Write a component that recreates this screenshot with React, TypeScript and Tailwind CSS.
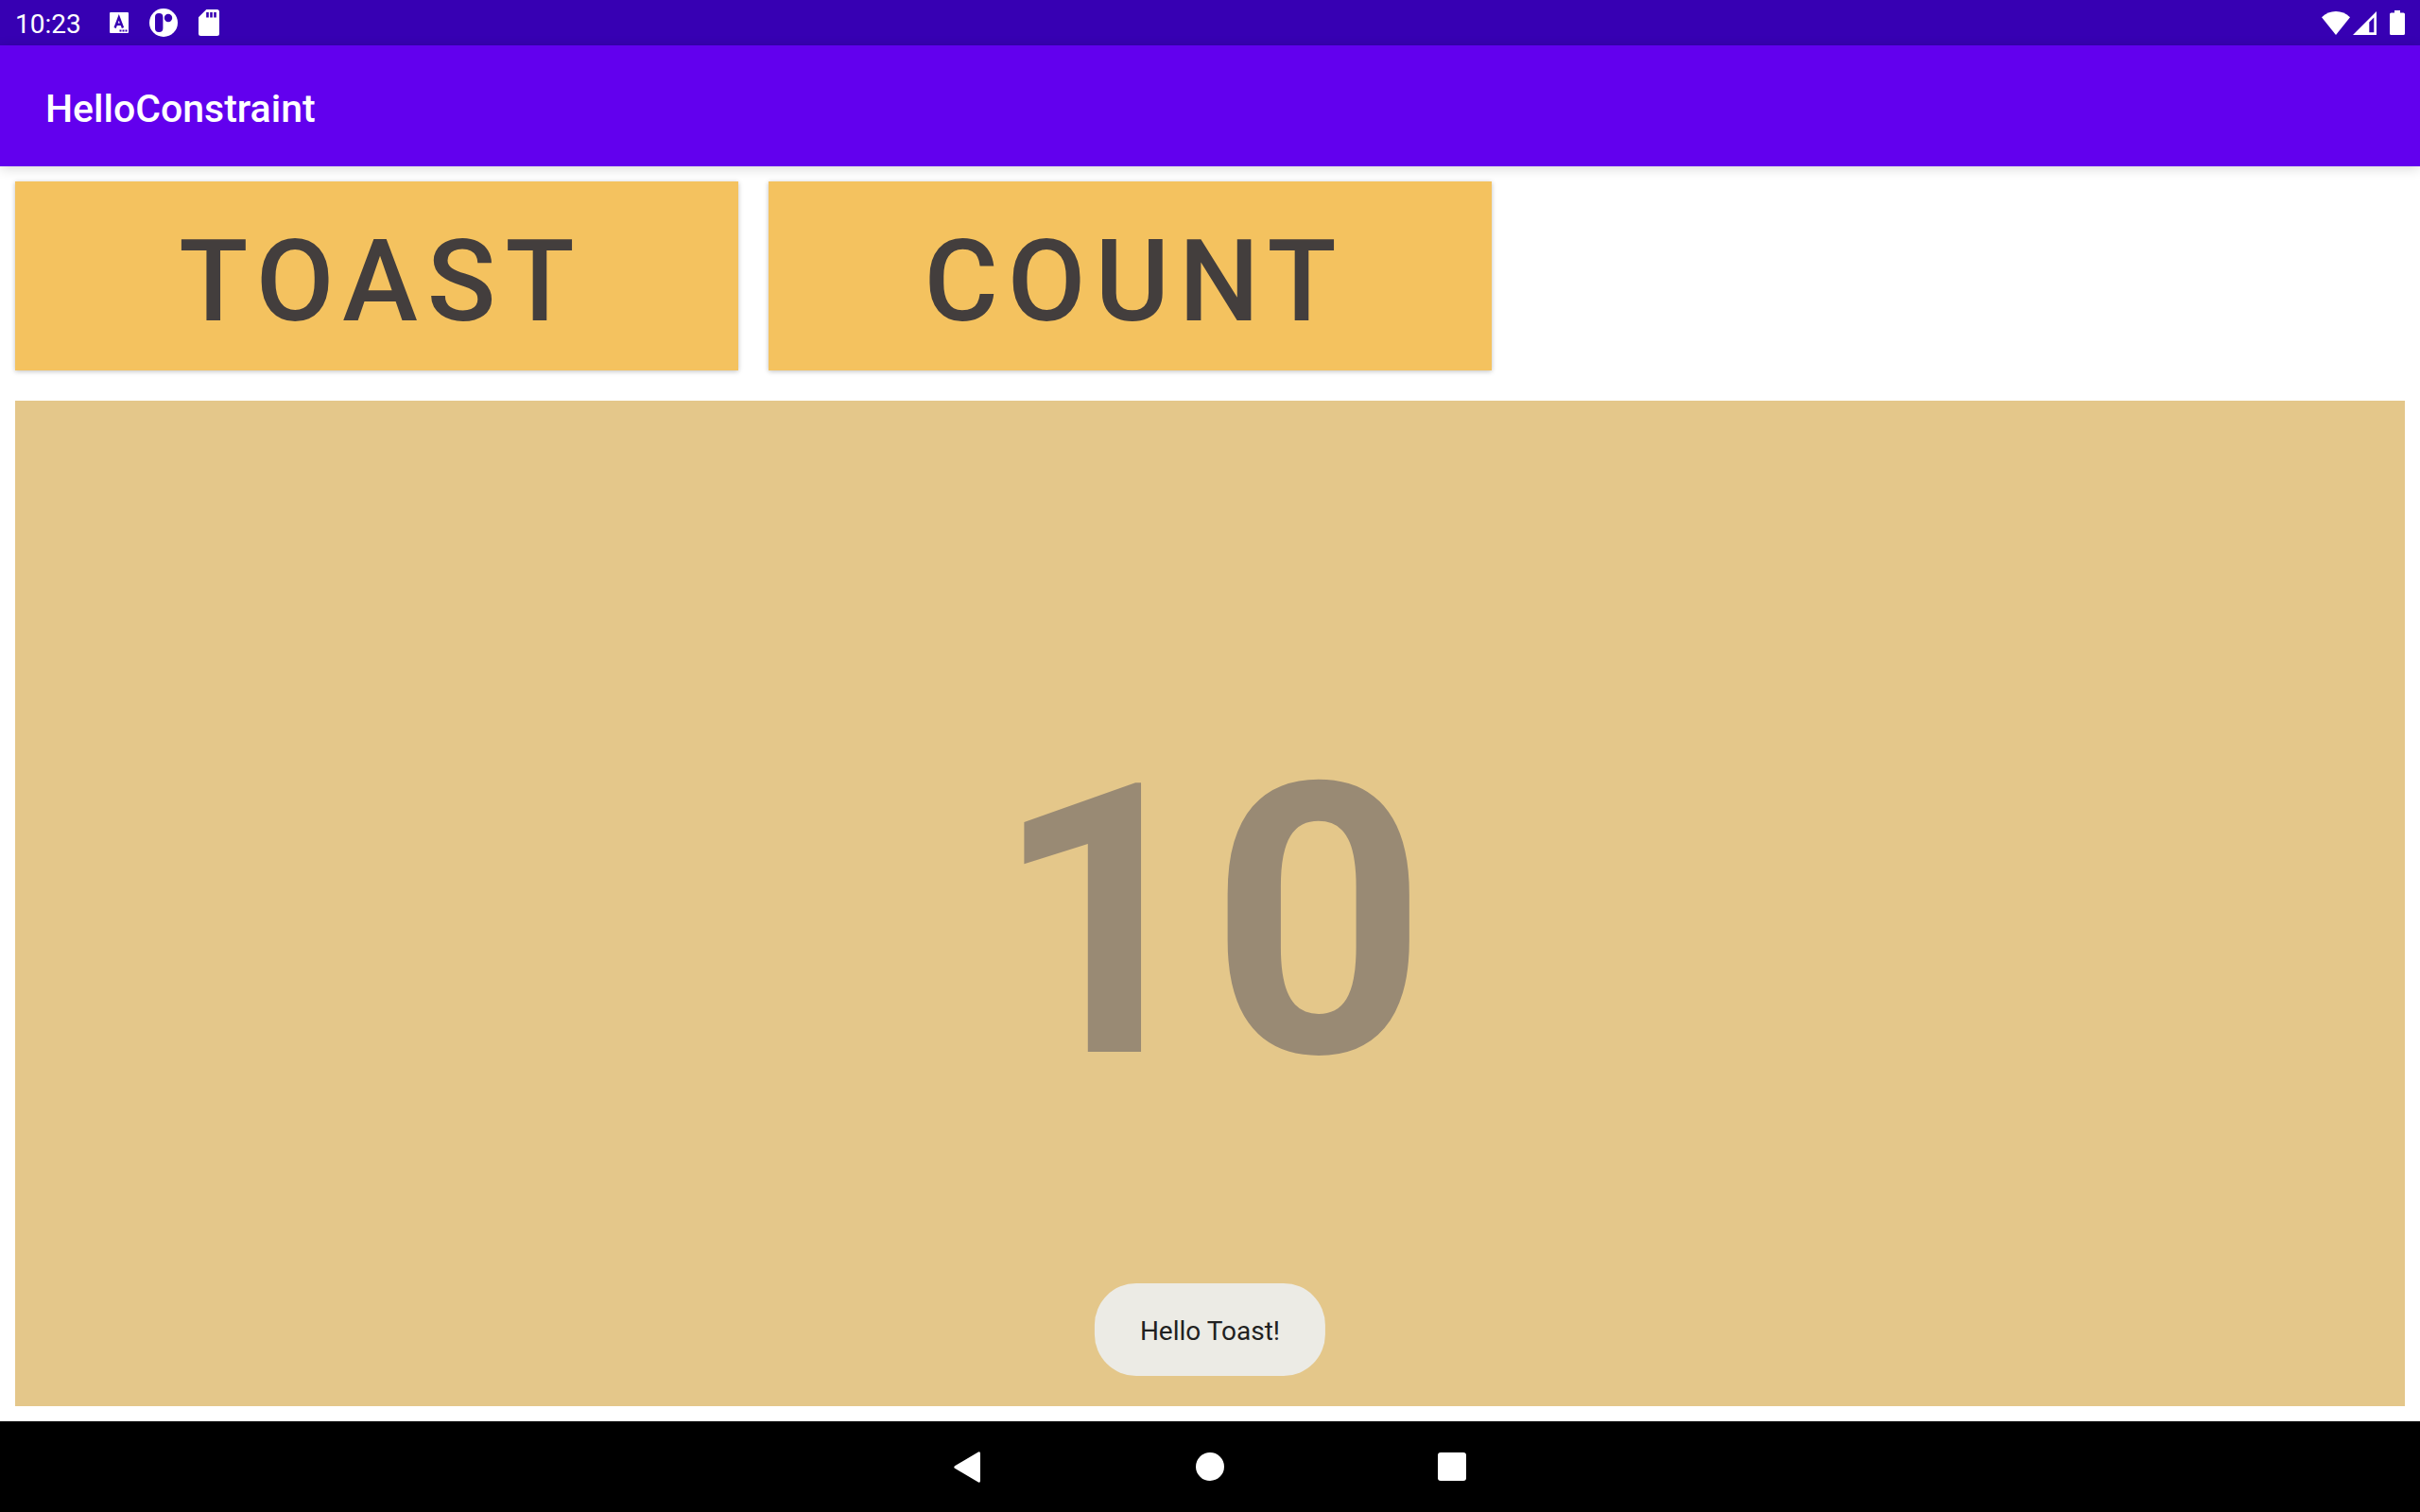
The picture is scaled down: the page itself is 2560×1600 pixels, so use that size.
import { useState } from "react";

function KeyboardIcon() {
  return (
    <svg className="h-[22px] w-5" viewBox="0 0 20 22" aria-hidden="true">
      <path fill="#fff" d="M1 0H19Q20 0 20 1V21Q20 22 19 22H1Q0 22 0 21V1Q0 0 1 0Z" />
      <path fill="none" stroke="#3700b3" strokeWidth="2.4" d="M5.6 16.5L9.8 5.4L14 16.5M7 12.8H12.6" />
      <path fill="#3700b3" d="M10.5 18.4h2v2h-2zM13.5 18.4h2v2h-2zM16.5 18.4h2v2h-2z" />
    </svg>
  );
}

function AppIcon() {
  return (
    <svg className="h-[30px] w-[30px]" viewBox="0 0 30 30" aria-hidden="true">
      <circle cx="15" cy="15" r="15" fill="#fff" />
      <rect x="6" y="5" width="8.4" height="20" rx="4" fill="#3700b3" />
      <circle cx="20" cy="10" r="4.2" fill="#3700b3" />
    </svg>
  );
}

function SdCardIcon() {
  return (
    <svg className="h-7 w-[22px]" viewBox="0 0 22 28" aria-hidden="true">
      <path fill="#fff" d="M8.3 0H19.5Q22 0 22 2.5V25.5Q22 28 19.5 28H2.5Q0 28 0 25.5V8.3Z" />
      <path fill="#3700b3" d="M8.2 3h2.6v5.600H8.2zM12.2 3h2.6v5.600h-2.6zM16.2 3h2.6v5.600h-2.6z" />
    </svg>
  );
}

function WifiIcon() {
  return (
    <svg className="h-[25px] w-[30px]" viewBox="0 0 30 25" aria-hidden="true">
      <path fill="#fff" d="M15 25L0 6.2Q6.5 0 15 0T30 6.2Z" />
    </svg>
  );
}

function SignalIcon() {
  return (
    <svg className="h-[25px] w-[25px]" viewBox="0 0 25 25" aria-hidden="true">
      <path fill="#fff" fillRule="evenodd" d="M25 0V25H0ZM22.3 6.5L17.3 11.5V22.3H22.3Z" />
    </svg>
  );
}

function BatteryIcon() {
  return (
    <svg className="h-[26px] w-4" viewBox="0 0 16 26" aria-hidden="true">
      <path fill="#fff" d="M5 0H11V2.5H14.5Q16 2.5 16 4V24.5Q16 26 14.5 26H1.5Q0 26 0 24.5V4Q0 2.5 1.5 2.5H5Z" />
    </svg>
  );
}

const actionButton =
  "h-[200px] w-[765px] bg-[#f4c25f] pt-3 pl-[10px] text-center text-[120px] leading-none font-medium tracking-[10px] text-[#433e3d] shadow-[0_1px_5px_rgba(0,0,0,0.25)]";

export default function App() {
  const [count, setCount] = useState(10);
  const [toast, setToast] = useState(true);

  return (
    <div className="flex min-h-screen flex-col bg-white font-[Roboto,sans-serif]">
      <div className="flex h-12 items-center bg-[#3700b3] px-4 text-white">
        <span className="pt-1 text-[28px] leading-8">10:23</span>
        <div className="ml-[30px] flex items-center gap-[22px]">
          <KeyboardIcon />
          <AppIcon />
          <SdCardIcon />
        </div>
        <div className="ml-auto flex items-center">
          <WifiIcon />
          <span className="ml-[3px]">
            <SignalIcon />
          </span>
          <span className="ml-3.5">
            <BatteryIcon />
          </span>
        </div>
      </div>

      <header className="flex h-32 items-center bg-[#6200ee] px-12 shadow-[0_2px_12px_rgba(0,0,0,0.16)]">
        <h1 className="pt-1.5 text-[41px] leading-[48px] font-medium text-white">HelloConstraint</h1>
      </header>

      <main className="flex flex-1 flex-col gap-8 p-4">
        <div className="flex gap-8">
          <button type="button" className={actionButton} onClick={() => setToast(!toast)}>
            TOAST
          </button>
          <button type="button" className={actionButton} onClick={() => setCount(count + 1)}>
            COUNT
          </button>
        </div>
        <section className="relative flex flex-1 items-center justify-center bg-[#e4c78a]">
          <output className="pt-[42px] text-[400px] leading-none font-bold text-[#998a74]">{count}</output>
          {toast && (
            <div
              role="status"
              className="absolute bottom-8 left-1/2 flex h-[98px] -translate-x-1/2 items-center rounded-[44px] bg-[#ecebe5] px-12 pt-1 text-[28px] leading-8 whitespace-nowrap text-[#212121]"
            >
              Hello Toast!
            </div>
          )}
        </section>
      </main>

      <nav className="flex h-24 items-center justify-center gap-[226px] bg-black">
        <button type="button" aria-label="Back">
          <svg className="h-[33px] w-[30px]" viewBox="1 0 30 33">
            <path fill="#fff" d="M2 15.2L27 0.5Q29 -0.3 29 2V31Q29 33.3 27 32.5L2 17.8Q0.5 16.5 2 15.2Z" />
          </svg>
        </button>
        <button type="button" aria-label="Home">
          <svg className="h-[30px] w-[30px]" viewBox="0 0 30 30">
            <circle cx="15" cy="15" r="15" fill="#fff" />
          </svg>
        </button>
        <button type="button" aria-label="Recent apps">
          <svg className="h-[30px] w-[30px]" viewBox="0 0 30 30">
            <rect width="30" height="30" rx="3" fill="#fff" />
          </svg>
        </button>
      </nav>
    </div>
  );
}
